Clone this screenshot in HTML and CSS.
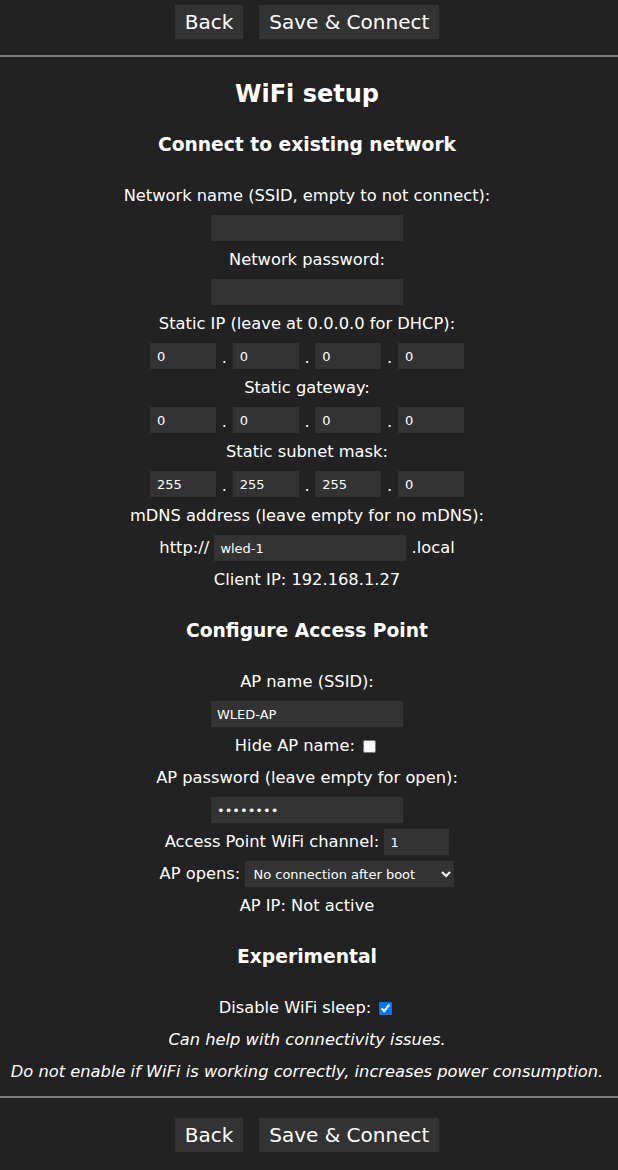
FILE: index.html
```html
<!DOCTYPE html>
<html lang="en">
<head>
	<meta charset="UTF-8">
	<title>WiFi Settings</title>
	<link rel="stylesheet" href="styles.css">
</head>
<body>
	<form class="page">
		<div class="toprow">
			<div class="btns">
				<button type="button" class="btn">Back</button>
				<button type="submit" class="btn">Save &amp; Connect</button>
			</div>
			<hr>
		</div>

		<div class="content">
			<h2>WiFi setup</h2>

			<h3>Connect to existing network</h3>
			<div class="line">Network name (SSID, empty to not connect):</div>
			<div class="line"><input type="text" class="txt" value=""></div>
			<div class="line">Network password:</div>
			<div class="line"><input type="password" class="txt" value=""></div>
			<div class="line">Static IP (leave at 0.0.0.0 for DHCP):</div>
			<div class="line"><input class="oct" value="0"><span class="dot">.</span><input class="oct" value="0"><span class="dot">.</span><input class="oct" value="0"><span class="dot">.</span><input class="oct" value="0"></div>
			<div class="line">Static gateway:</div>
			<div class="line"><input class="oct" value="0"><span class="dot">.</span><input class="oct" value="0"><span class="dot">.</span><input class="oct" value="0"><span class="dot">.</span><input class="oct" value="0"></div>
			<div class="line">Static subnet mask:</div>
			<div class="line"><input class="oct" value="255"><span class="dot">.</span><input class="oct" value="255"><span class="dot">.</span><input class="oct" value="255"><span class="dot">.</span><input class="oct" value="0"></div>
			<div class="line">mDNS address (leave empty for no mDNS):</div>
			<div class="line">http:// <input type="text" class="txt" value="wled-1"> .local</div>
			<div class="line">Client IP: 192.168.1.27</div>

			<h3>Configure Access Point</h3>
			<div class="line">AP name (SSID):</div>
			<div class="line"><input type="text" class="txt" value="WLED-AP"></div>
			<div class="line">Hide AP name: <input type="checkbox" class="chk"></div>
			<div class="line">AP password (leave empty for open):</div>
			<div class="line"><input type="password" class="txt pw" value="12345678"></div>
			<div class="line">Access Point WiFi channel: <input type="number" class="num" value="1"></div>
			<div class="line">AP opens: <select class="sel"><option>No connection after boot</option><option>Disconnected</option><option>Always</option><option>Never (not recommended)</option></select></div>
			<div class="line">AP IP: Not active</div>

			<h3>Experimental</h3>
			<div class="line">Disable WiFi sleep: <input type="checkbox" class="chk" checked></div>
			<div class="line"><i>Can help with connectivity issues.</i></div>
			<div class="line"><i>Do not enable if WiFi is working correctly, increases power consumption.</i></div>
		</div>

		<hr class="foot">
		<div class="btns">
			<button type="button" class="btn">Back</button>
			<button type="submit" class="btn">Save &amp; Connect</button>
		</div>
	</form>
</body>
</html>
```

FILE: styles.css
```css
body{
	margin: 0;
	background: #222;
	color: #fff;
	font-family: "DejaVu Sans", Verdana, sans-serif;
	font-size: 16.3px;
	line-height: 32px;
	text-align: center;
}
.page{
	margin: 0;
	padding-bottom: 20px;
}
.toprow{
	padding-top: 5px;
}
.btns{
	display: flex;
	justify-content: center;
	gap: 16px;
	padding-right: 4px;
}
.btn{
	background: #333;
	color: #fff;
	font-family: "DejaVu Sans", Verdana, sans-serif;
	font-size: 20px;
	height: 34px;
	padding: 0 10px;
	border: 0;
	margin: 0;
	cursor: pointer;
}
hr{
	height: 0;
	margin: 16px 0 0;
	border: 0;
	border-top: 2px solid #7a7a7a;
}
hr.foot{
	margin: 8px 0 20px;
}
.content{
	padding-right: 4px;
}
h2{
	font-size: 24px;
	line-height: 28px;
	margin: 23px 0 19px;
}
h3{
	font-size: 18.7px;
	line-height: 36px;
	margin: 17px 0;
}
.line{
	display: flex;
	justify-content: center;
	align-items: center;
	height: 32px;
	white-space: pre;
}
input, select{
	background: #333;
	color: #fff;
	font-family: "DejaVu Sans", Verdana, sans-serif;
	font-size: 13px;
	border: 0;
	outline: 0;
	box-sizing: border-box;
	height: 26px;
	margin: 0;
}
.txt{
	width: 192px;
	padding: 0 6px;
}
.oct{
	width: 66px;
	padding: 0 7px;
}
.dot{
	display: inline-block;
	width: 16.67px;
	text-align: center;
	align-self: flex-end;
	line-height: 28px;
}
.num{
	width: 65px;
	padding: 0 6px;
}
.num::-webkit-inner-spin-button{
	display: none;
}
.sel{
	width: 209px;
	padding: 0 4px;
	color-scheme: dark;
}
.chk{
	width: 13px;
	height: 13px;
	margin: 0 3px;
}
i{
	font-style: italic;
}
```
